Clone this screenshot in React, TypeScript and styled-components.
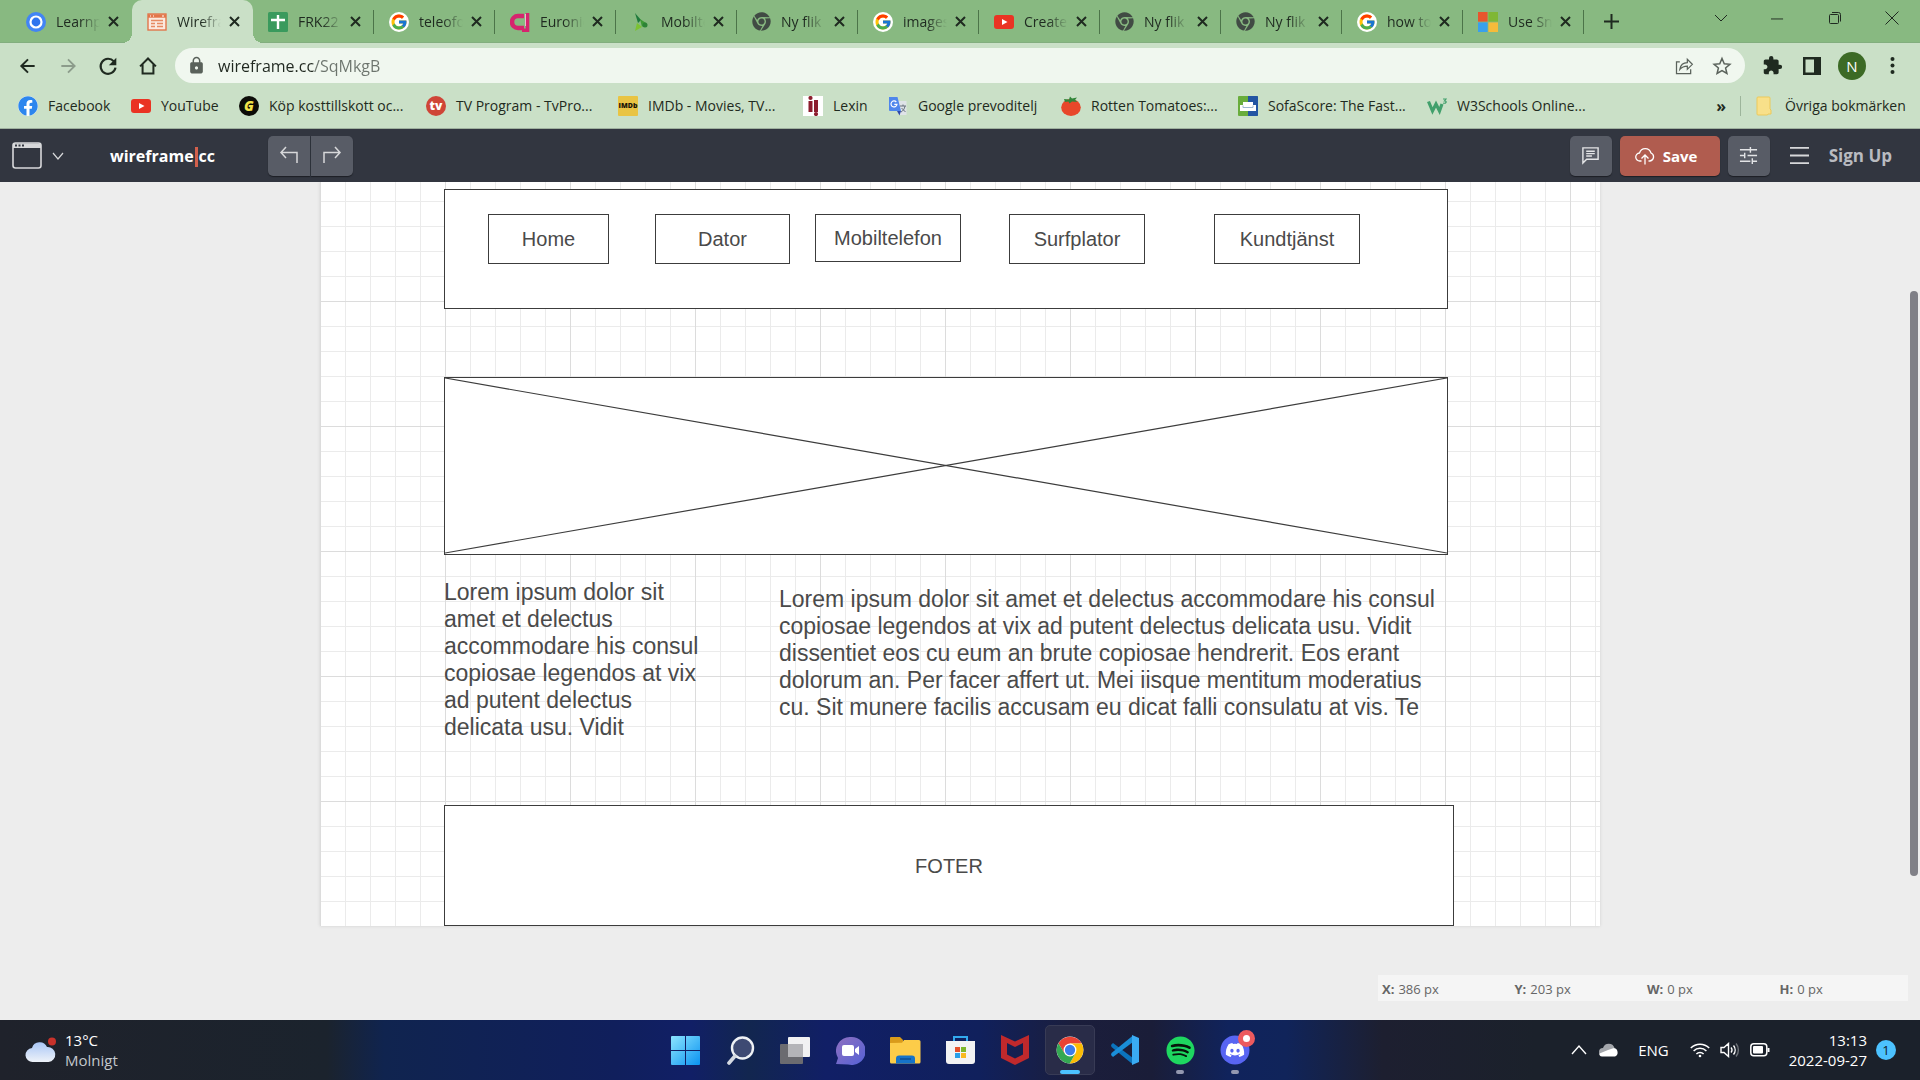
import React from "react";
import styled, { createGlobalStyle, css } from "styled-components";
import { FcGoogle } from "react-icons/fc";
import { FaSpotify, FaDiscord, FaFacebook, FaChrome } from "react-icons/fa";
import { MdExtension, MdLock } from "react-icons/md";

const GlobalStyle = createGlobalStyle`
  *, *::before, *::after { box-sizing: border-box; }
  body { margin: 0; font-family: "Open Sans", "Noto Sans", sans-serif; font-size: 14px; color: #1f2a20; }
  button, input { font: inherit; color: inherit; margin: 0; padding: 0; border: 0; background: none; }
  svg { display: block; flex: none; }
  p { margin: 0; }
`;

const Screen = styled.div`
  display: flex;
  flex-direction: column;
  height: 100vh;
  overflow: hidden;
`;

/* ---------- browser: tab strip ---------- */

const TabStrip = styled.header`
  display: flex;
  flex: none;
  height: 43px;
  padding-left: 11px;
  background: #88b981;
  border-bottom: 1px solid #82ae7e;
`;

const TabItem = styled.div<{ $active?: boolean; $divider?: boolean }>`
  position: relative;
  display: flex;
  align-items: center;
  flex: 0 1 121px;
  min-width: 0;
  height: 43px;
  padding: 0 9px 0 15px;
  gap: 10px;
  ${(p) =>
    p.$divider &&
    css`
      &::after {
        content: "";
        position: absolute;
        right: 0;
        top: 10px;
        width: 1px;
        height: 24px;
        background: #4c7449;
      }
    `}
  ${(p) =>
    p.$active &&
    css`
      background: #cae0c7;
      border-radius: 10px 10px 0 0;
      &::before,
      &::after {
        content: "";
        position: absolute;
        bottom: 0;
        width: 10px;
        height: 10px;
      }
      &::before {
        left: -10px;
        background: radial-gradient(circle at 0 0, transparent 10px, #cae0c7 10px);
      }
      &::after {
        right: -10px;
        background: radial-gradient(circle at 100% 0, transparent 10px, #cae0c7 10px);
      }
    `}
`;

const TabLabel = styled.button`
  flex: 1 1 0;
  width: 0;
  min-width: 0;
  overflow: hidden;
  white-space: nowrap;
  text-align: left;
  line-height: 20px;
  mask-image: linear-gradient(90deg, #000 24px, transparent 44px);
`;

const CloseTab = styled.button`
  display: grid;
  place-items: center;
  flex: none;
  width: 20px;
  height: 20px;
  margin-left: -7px;
`;

const NewTab = styled.button`
  display: grid;
  place-items: center;
  width: 54px;
  height: 42px;
`;

const WindowControls = styled.div`
  display: flex;
  margin-left: auto;
  height: 36px;
`;

const WindowButton = styled.button`
  display: grid;
  place-items: center;
  width: 57px;
`;

/* ---------- browser: address row ---------- */

const AddressRow = styled.div`
  display: flex;
  flex: none;
  align-items: center;
  height: 45px;
  padding: 0 8px;
  background: #cae0c7;
`;

const BarButton = styled.button<{ $w?: number }>`
  display: grid;
  place-items: center;
  width: ${(p) => p.$w ?? 40}px;
  height: 35px;
`;

const Omnibox = styled.label`
  display: flex;
  flex: 1;
  align-items: center;
  height: 35px;
  margin: 0 7px;
  padding: 0 4px 0 12px;
  border-radius: 18px;
  background: #f0f7ef;
  color: #5a625b;
`;

const UrlInput = styled.input`
  flex: 1;
  min-width: 0;
  margin-left: 12px;
  outline: 0;
  font-size: 16px;
  line-height: 24px;
  color: #202820;
  background: linear-gradient(90deg, #202820 96px, #6c746d 96px);
  background-clip: text;
  -webkit-text-fill-color: transparent;
`;

const Avatar = styled.span`
  display: grid;
  place-items: center;
  width: 28px;
  height: 28px;
  border-radius: 50%;
  background: #3c6a25;
  color: #fff;
  font-size: 15px;
`;

/* ---------- browser: bookmarks ---------- */

const Bookmarks = styled.nav`
  display: flex;
  flex: none;
  align-items: center;
  height: 41px;
  padding: 0 12px 4px 18px;
  background: #cae0c7;
  border-bottom: 1px solid #9fb19f;
`;

const Bookmark = styled.a<{ $w: number }>`
  display: flex;
  align-items: center;
  gap: 10px;
  width: ${(p) => p.$w}px;
  white-space: nowrap;
  line-height: 20px;
  color: #1f2a20;
  text-decoration: none;
`;

const BookmarksEnd = styled.div`
  display: flex;
  align-items: center;
  gap: 14px;
  margin-left: auto;
`;

const Overflow = styled.button`
  font-size: 16px;
  font-weight: 700;
  line-height: 20px;
`;

const Rule = styled.span`
  width: 1px;
  height: 20px;
  background: #9db59b;
`;

const Badge = styled.span<{ $bg: string; $fg: string; $round?: boolean; $size?: number }>`
  display: grid;
  place-items: center;
  flex: none;
  width: 20px;
  height: 20px;
  border-radius: ${(p) => (p.$round ? "50%" : "1px")};
  background: ${(p) => p.$bg};
  color: ${(p) => p.$fg};
  font-size: ${(p) => p.$size ?? 12}px;
  font-weight: 800;
  line-height: 20px;
  overflow: hidden;
`;

const White = styled.span`
  display: grid;
  place-items: center;
  flex: none;
  width: 20px;
  height: 20px;
  border-radius: 50%;
  background: #fff;
`;

/* ---------- wireframe editor ---------- */

const Toolbar = styled.div`
  display: flex;
  flex: none;
  align-items: center;
  height: 53px;
  padding: 0 28px 0 12px;
  background: #323640;
  color: #fff;
`;

const DeviceButton = styled.button`
  display: flex;
  align-items: center;
  gap: 10px;
  width: 98px;
`;

const Wordmark = styled.a`
  width: 158px;
  color: #fff;
  font-size: 16px;
  font-weight: 700;
  line-height: 24px;
  text-decoration: none;
`;

const Caret = styled.span`
  display: inline-block;
  width: 3px;
  height: 20px;
  margin: 0 1px;
  vertical-align: middle;
  background: #d2604c;
`;

const ToolGroup = styled.div`
  display: flex;
  gap: 1px;
`;

const ToolButton = styled.button<{ $radius?: string }>`
  display: grid;
  place-items: center;
  width: 42px;
  height: 40px;
  border-radius: ${(p) => p.$radius ?? "5px"};
  background: #585c66;
  box-shadow: 0 1px 1px #1c1f25;
`;

const ToolbarEnd = styled.div`
  display: flex;
  align-items: center;
  gap: 8px;
  margin-left: auto;
`;

const SaveButton = styled.button`
  display: flex;
  align-items: center;
  gap: 8px;
  width: 100px;
  height: 40px;
  padding-left: 15px;
  border-radius: 5px;
  background: #b05c4f;
  box-shadow: 0 1px 1px #1c1f25;
  font-size: 15px;
  font-weight: 700;
`;

const MenuButton = styled.button`
  margin: 0 12px;
`;

const SignUp = styled.a`
  color: #b9bbc0;
  font-size: 17px;
  font-weight: 700;
  line-height: 24px;
  text-decoration: none;
`;

const Workspace = styled.main`
  position: relative;
  flex: 1;
  min-height: 0;
  overflow: hidden;
  background: #ededed;
`;

const Paper = styled.section`
  position: relative;
  width: 1280px;
  height: 744px;
  margin: 0 auto;
  background-color: #fff;
  background-image: linear-gradient(90deg, #dcdcdc 1px, transparent 1px),
    linear-gradient(#dcdcdc 1px, transparent 1px),
    linear-gradient(90deg, #ebebeb 1px, transparent 1px),
    linear-gradient(#ebebeb 1px, transparent 1px);
  background-size: 125px 125px, 125px 125px, 25px 25px, 25px 25px;
  background-position: 0 0, 0 119px, 0 0, 0 19px;
  box-shadow: 0 0 3px #cfcfcf;
  font-family: "Liberation Sans", Arial, sans-serif;
  color: #4a4a4a;
`;

type Area = { $x: number; $y: number; $w: number; $h?: number };

const area = css<Area>`
  position: absolute;
  left: ${(p) => p.$x}px;
  top: ${(p) => p.$y}px;
  width: ${(p) => p.$w}px;
  height: ${(p) => (p.$h ? `${p.$h}px` : "auto")};
`;

const Shape = styled.div<Area>`
  ${area}
  display: grid;
  place-items: center;
  border: 1px solid #3c3c3c;
  background: #fff;
  font-size: 20px;
  line-height: 24px;
`;

const NavShape = styled.button<Area>`
  ${area}
  border: 1px solid #3c3c3c;
  background: #fff;
  font-size: 20px;
  line-height: 24px;
`;

const Copy = styled.p<Area>`
  ${area}
  font-size: 23px;
  line-height: 27px;
`;

const Cross = styled.svg`
  width: 100%;
  height: 100%;
`;

const Thumb = styled.div`
  position: absolute;
  top: 13%;
  right: 2px;
  width: 8px;
  height: 585px;
  border-radius: 4px;
  background: #808087;
`;

const Coordinates = styled.dl`
  position: absolute;
  right: 12px;
  bottom: 19px;
  display: grid;
  grid-template-columns: repeat(4, 1fr);
  width: 530px;
  height: 26px;
  margin: 0;
  background: #f5f5f5;
  color: #666;
  font-size: 13px;
  line-height: 28px;
`;

const Coordinate = styled.div`
  display: flex;
  gap: 4px;
  padding-left: 4px;
  dt { font-weight: 700; }
  dd { margin: 0; }
`;

/* ---------- desktop taskbar ---------- */

const Taskbar = styled.footer`
  display: grid;
  grid-template-columns: 1fr auto 1fr;
  flex: none;
  align-items: center;
  height: 60px;
  background: linear-gradient(
    90deg,
    #1f222b 0%,
    #1b232d 17%,
    #10244f 20%,
    #101f5c 32%,
    #111f66 36%,
    #12264f 39%,
    #111f66 43%,
    #10205c 51%,
    #1b1e3c 56%,
    #1a1d38 60%,
    #10235c 64%,
    #10245a 67%,
    #1d1f30 72%,
    #1b212b 80%
  );
  color: #fff;
  font-size: 15px;
`;

const Weather = styled.button`
  display: flex;
  align-items: center;
  gap: 8px;
  padding-left: 25px;
  text-align: left;
  line-height: 20px;
`;

const Lines = styled.span<{ $right?: boolean }>`
  display: flex;
  flex-direction: column;
  text-align: ${(p) => (p.$right ? "right" : "left")};
  line-height: 20px;
`;

const Muted = styled.span`
  color: #c3c7cb;
`;

const Apps = styled.div`
  display: flex;
  gap: 5px;
`;

const AppButton = styled.button<{ $open?: boolean; $running?: boolean }>`
  position: relative;
  display: grid;
  place-items: center;
  width: 50px;
  height: 50px;
  border: 1px solid ${(p) => (p.$open ? "#383b55" : "transparent")};
  border-radius: 5px;
  background: ${(p) => (p.$open ? "#292c48" : "transparent")};
  ${(p) =>
    (p.$open || p.$running) &&
    css`
      &::after {
        content: "";
        position: absolute;
        bottom: 0;
        left: 50%;
        width: ${p.$open ? 20 : 8}px;
        height: 4px;
        margin-left: ${p.$open ? -10 : -4}px;
        border-radius: 2px;
        background: ${p.$open ? "#4cc2ff" : "#9398b0"};
      }
    `}
`;

const Notice = styled.span`
  position: absolute;
  top: 4px;
  right: 4px;
  width: 17px;
  height: 17px;
  border: 5px solid #ec5a5e;
  border-radius: 50%;
  background: #fff;
`;

const Tray = styled.div`
  display: flex;
  align-items: center;
  justify-content: flex-end;
  padding-right: 24px;
`;

const TrayButton = styled.button<{ $gap: number }>`
  display: flex;
  align-items: center;
  gap: 10px;
  margin-right: ${(p) => p.$gap}px;
`;

const Count = styled.span`
  display: grid;
  place-items: center;
  width: 20px;
  height: 20px;
  border-radius: 50%;
  background: #4cc2ff;
  color: #10202c;
  font-size: 13px;
`;

/* ---------- drawings ---------- */

const Stroke = ({ d, size = 20, width = 2, color = "currentColor", box = 24 }: { d: string; size?: number; width?: number; color?: string; box?: number }) => (
  <svg width={size} height={size} viewBox={`0 0 ${box} ${box}`} fill="none" stroke={color} strokeWidth={width}>
    <path d={d} />
  </svg>
);

const RingIcon = () => (
  <svg width="20" height="20" viewBox="0 0 20 20">
    <circle cx="10" cy="10" r="10" fill="#4285f4" />
    <circle cx="10" cy="10" r="5.5" fill="#2f74ee" stroke="#fff" strokeWidth="2.2" />
  </svg>
);

const WireIcon = () => (
  <svg width="20" height="20" viewBox="0 0 20 20">
    <rect x="1" y="2" width="18" height="16" fill="#fbe9df" stroke="#e2764a" strokeWidth="1.4" />
    <path d="M1 4h18" stroke="#e2764a" strokeWidth="3.4" />
    <path d="M3 4h1M6 4h1M15 4h2" stroke="#fff" strokeWidth="1.2" />
    <path d="M4 8.5h12M4 11.5h4M4 14.5h4M10 11.5h6M10 14.5h6" stroke="#e68a62" strokeWidth="1.5" />
  </svg>
);

const SheetIcon = () => (
  <svg width="20" height="20" viewBox="0 0 20 20">
    <rect width="20" height="20" rx="1.5" fill="#3a9a5d" />
    <path d="M10 3v14M3 8h14" stroke="#fff" strokeWidth="2.4" />
  </svg>
);

const GoogleIcon = () => (
  <White>
    <FcGoogle size={18} />
  </White>
);

const EuronicsIcon = () => (
  <svg width="20" height="20" viewBox="0 0 20 20" fill="none">
    <path d="M14 4H8a6 6 0 0 0 0 12h6" stroke="#d6246e" strokeWidth="4.600" />
    <path d="M17.500 1v17.300H12" stroke="#d6246e" strokeWidth="3.600" />
    <path d="M15.500 2v12" stroke="#f2b6cf" strokeWidth="1" />
  </svg>
);

const LeafIcon = () => (
  <svg width="20" height="20" viewBox="0 0 20 20">
    <path d="M4 1l6 7-3 3z" fill="#1f7a3c" />
    <path d="M9 7l6 4-4 4z" fill="#3d9a35" />
    <path d="M4 19l2-8 5 4z" fill="#7cc232" />
    <circle cx="14" cy="13" r="2.500" fill="#2c8436" />
  </svg>
);

const ChromeGrey = () => <FaChrome size={19} color="#414b44" />;

const YoutubeIcon = () => (
  <svg width="20" height="20" viewBox="0 0 20 20">
    <rect y="3" width="20" height="14" rx="3" fill="#ea3323" />
    <path d="M8 7l5.500 3L8 13z" fill="#fff" />
  </svg>
);

const MicrosoftIcon = ({ size = 20 }: { size?: number }) => (
  <svg width={size} height={size} viewBox="0 0 20 20">
    <path fill="#e8552d" d="M0 0h9.600v9.600H0z" />
    <path fill="#7fb735" d="M10.400 0H20v9.600h-9.600z" />
    <path fill="#3aa0ec" d="M0 10.400h9.600V20H0z" />
    <path fill="#f5bb3a" d="M10.400 10.400H20V20h-9.600z" />
  </svg>
);

const LexinIcon = () => (
  <svg width="20" height="20" viewBox="0 0 20 20">
    <rect width="20" height="20" fill="#fff" />
    <g fill="#8c1c2c">
      <circle cx="7.500" cy="2" r="2.100" />
      <path d="M5.500 5h4v11h-4zM11 4h4v12h-4z" />
      <circle cx="13" cy="18" r="2.100" />
    </g>
  </svg>
);

const TranslateIcon = () => (
  <svg width="20" height="20" viewBox="0 0 20 20" fill="none">
    <path d="M7 5h11.500v14H11z" fill="#dfe3e8" />
    <path d="M12 10h6M15 8.500V10M13 16c2-1 3.500-3 4-6M13.500 12l4 4" stroke="#66717d" strokeWidth="1" />
    <path d="M9 15h4l-1.500 4.500z" fill="#2e49a8" />
    <path d="M1 1h8.500L13 15H2a1 1 0 0 1-1-1z" fill="#4f86ec" />
    <path d="M8.300 6A3 3 0 1 0 9 8.300H6.300" stroke="#fff" strokeWidth="1.200" />
  </svg>
);

const TomatoIcon = () => (
  <svg width="20" height="20" viewBox="0 0 20 20">
    <ellipse cx="10" cy="11.500" rx="9.800" ry="8.500" fill="#e8472a" />
    <path d="M3 3l5 .5L9 .5l2 2 5-1-2 2.500 2.500 2L11 5.500 8.500 7.500 7.500 5.500 4 6z" fill="#31863a" />
  </svg>
);

const SofaIcon = () => (
  <svg width="20" height="20" viewBox="0 0 20 20">
    <rect width="20" height="20" rx="1" fill="#69ad3c" />
    <path d="M10 0h9a1 1 0 0 1 1 1v18a1 1 0 0 1-1 1h-9z" fill="#2355a3" />
    <path d="M5 6h10v3h3v6H2V9h3z" fill="#fff" />
    <path d="M5 9.500v2h10v-2" fill="none" stroke="#9cb6cf" />
  </svg>
);

const W3Icon = () => (
  <svg width="20" height="20" viewBox="0 0 20 20" fill="none" stroke="#42a06c">
    <path d="M1.500 5.500L5.500 15 9 8l3.500 7L15 8" strokeWidth="3.200" />
    <path d="M16 3h3l-1.500 2c3 0 1.500 3-1.500 2" strokeWidth="1.200" />
  </svg>
);

const FolderIcon = () => (
  <svg width="20" height="20" viewBox="0 0 20 20">
    <path d="M2 2a1 1 0 0 1 1-1h11a1 1 0 0 1 1 1v11l1 1v4h-3l-.5 1H3a1 1 0 0 1-1-1z" fill="#f8e08a" stroke="#ecc95a" />
  </svg>
);

const CloseIcon = () => <Stroke d="M1 1l9 9M10 1l-9 9" size={11} width={2} box={11} />;

const ChromeColor = () => (
  <svg width="28" height="28" viewBox="0 0 48 48">
    <circle cx="24" cy="24" r="23" fill="#fff" />
    <path d="M24 13h20A23 23 0 0 0 4.100 12.500L14.500 30z" fill="#ea4335" />
    <path d="M33.500 29.500L23.500 47A23 23 0 0 0 44 13H24z" fill="#fbbc05" />
    <path d="M14.500 29.500L4.100 12.500A23 23 0 0 0 23.500 47l10-17.500z" fill="#34a853" />
    <circle cx="24" cy="24" r="11" fill="#fff" />
    <circle cx="24" cy="24" r="8.800" fill="#3b7ded" />
  </svg>
);

const StartIcon = () => (
  <svg width="29" height="29" viewBox="0 0 29 29">
    <linearGradient id="start" x1="0" y1="0" x2="1" y2="1">
      <stop stopColor="#8ce4ff" />
      <stop offset="1" stopColor="#0a93f0" />
    </linearGradient>
    <path fill="url(#start)" d="M0 1a1 1 0 0 1 1-1h13v14H0zM15 0h13a1 1 0 0 1 1 1v13H15zM0 15h14v14H1a1 1 0 0 1-1-1zM15 15h14v13a1 1 0 0 1-1 1H15z" />
  </svg>
);

const SearchIcon = () => (
  <svg width="29" height="29" viewBox="0 0 29 29" fill="none">
    <circle cx="16.500" cy="12" r="10.500" fill="#3e4a73" stroke="#eef1f5" strokeWidth="2.400" />
    <path d="M9 20l-6 7" stroke="#d5dae2" strokeWidth="3.600" strokeLinecap="round" />
  </svg>
);

const TaskViewIcon = () => (
  <svg width="31" height="29" viewBox="0 0 31 29">
    <rect x="8" y="1" width="22" height="20" rx="1" fill="#f1f1f2" />
    <rect x="0" y="8" width="23" height="20" rx="1" fill="#6b6b70" />
    <path d="M8 8h15v13H8z" fill="#b4b4b8" />
  </svg>
);

const TeamsIcon = () => (
  <svg width="29" height="29" viewBox="0 0 29 29">
    <linearGradient id="teams" x1="0" y1="0" x2="1" y2="1">
      <stop stopColor="#8f6fc0" />
      <stop offset="1" stopColor="#5462d6" />
    </linearGradient>
    <path d="M15 1a14 14 0 1 1-3 27.500L0 28l2-6A14 14 0 0 1 15 1z" fill="url(#teams)" />
    <rect x="6" y="9" width="12" height="11" rx="2" fill="#fff" />
    <path d="M19 13l4-3v9l-4-3z" fill="#fff" />
  </svg>
);

const ExplorerIcon = () => (
  <svg width="31" height="28" viewBox="0 0 31 28">
    <path d="M0 2a1 1 0 0 1 1-1h9l3 3v6H0z" fill="#d99b1a" />
    <path d="M0 7l12-.2 2-2.800h15a1.500 1.500 0 0 1 1.500 1.500V26a1.500 1.500 0 0 1-1.500 1.500H1.500A1.500 1.500 0 0 1 0 26z" fill="#fccc49" />
    <path d="M6 27.500v-5a3 3 0 0 1 3-3h13a3 3 0 0 1 3 3v5z" fill="#1673c8" />
    <path d="M10 23h11" stroke="#0d4d93" strokeWidth="1.500" />
  </svg>
);

const StoreIcon = () => (
  <svg width="29" height="30" viewBox="0 0 29 30">
    <path d="M8 7V2h13v5" fill="none" stroke="#32a9ee" strokeWidth="2" />
    <path d="M0 6h29v20a3 3 0 0 1-3 3H3a3 3 0 0 1-3-3z" fill="#f2f2f3" />
    <path fill="#e5502a" d="M9 12h5v5H9z" />
    <path fill="#7db62b" d="M15 12h5v5h-5z" />
    <path fill="#2a9fe8" d="M9 18h5v5H9z" />
    <path fill="#f8b91f" d="M15 18h5v5h-5z" />
  </svg>
);

const ShieldIcon = () => (
  <svg width="28" height="30" viewBox="0 0 28 30">
    <path d="M0 0l14 6.500L28 0v23l-14 7-14-7zM6 8v11.500l8 4 8-4V8l-8 4z" fill="#c0292c" fillRule="evenodd" />
  </svg>
);

const CodeIcon = () => (
  <svg width="30" height="30" viewBox="0 0 30 30">
    <path d="M1 10l2-2 20 15v6.500L1.500 12z" fill="#0b74bd" />
    <path d="M1 20l2 2L23 7V.5L1.500 18z" fill="#1a8ed8" />
    <path d="M22 0l7 3v24l-7 3z" fill="#3aabf3" />
  </svg>
);

const CloudIcon = () => (
  <svg width="32" height="26" viewBox="0 0 32 26">
    <linearGradient id="cloud" x1="0" y1="0" x2="0" y2="1">
      <stop stopColor="#a9c6f6" />
      <stop offset="1" stopColor="#eef2f8" />
    </linearGradient>
    <path d="M8 25a7 7 0 0 1-1-14 8 8 0 0 1 15-1 7.500 7.500 0 0 1 1.500 15z" fill="url(#cloud)" />
    <circle cx="27" cy="4.500" r="4" fill="#c8322b" />
  </svg>
);

const SpotifyIcon = () => (
  <svg width="29" height="29" viewBox="0 0 29 29">
    <circle cx="14.500" cy="14.500" r="12" fill="#07150b" />
    <FaSpotify size={29} color="#1ed760" />
  </svg>
);

const DiscordIcon = () => (
  <svg width="30" height="30" viewBox="0 0 30 30">
    <circle cx="15" cy="15" r="14.500" fill="#5865f2" />
    <FaDiscord x={5} y={5} size={20} color="#fff" />
  </svg>
);

/* ---------- data ---------- */

const tabs = [
  { label: "Learnpoint", icon: <RingIcon /> },
  { label: "Wireframe", icon: <WireIcon />, active: true },
  { label: "FRK22", icon: <SheetIcon />, divider: true },
  { label: "teleofon", icon: <GoogleIcon />, divider: true },
  { label: "Euronics", icon: <EuronicsIcon />, divider: true },
  { label: "Mobiltelefon", icon: <LeafIcon />, divider: true },
  { label: "Ny flik", icon: <ChromeGrey />, divider: true },
  { label: "images", icon: <GoogleIcon />, divider: true },
  { label: "Create", icon: <YoutubeIcon />, divider: true },
  { label: "Ny flik", icon: <ChromeGrey />, divider: true },
  { label: "Ny flik", icon: <ChromeGrey />, divider: true },
  { label: "how to", icon: <GoogleIcon />, divider: true },
  { label: "Use Snip", icon: <MicrosoftIcon />, divider: true },
];

const bookmarks = [
  { label: "Facebook", width: 113, icon: <White><FaFacebook size={20} color="#2d86ee" /></White> },
  { label: "YouTube", width: 108, icon: <YoutubeIcon /> },
  { label: "Köp kosttillskott oc...", width: 187, icon: <Badge $bg="#0c0c08" $fg="#f2e34a" $round $size={14}><i>G</i></Badge> },
  { label: "TV Program - TvPro...", width: 192, icon: <Badge $bg="#cf4537" $fg="#fff" $round>tv</Badge> },
  { label: "IMDb - Movies, TV...", width: 185, icon: <Badge $bg="#e9c443" $fg="#1a1608" $size={7}>IMDb</Badge> },
  { label: "Lexin", width: 85, icon: <LexinIcon /> },
  { label: "Google prevoditelj", width: 173, icon: <TranslateIcon /> },
  { label: "Rotten Tomatoes:...", width: 177, icon: <TomatoIcon /> },
  { label: "SofaScore: The Fast...", width: 189, icon: <SofaIcon /> },
  { label: "W3Schools Online...", width: 170, icon: <W3Icon /> },
];

const navShapes = [
  { label: "Home", x: 168, w: 121, h: 50 },
  { label: "Dator", x: 335, w: 135, h: 50 },
  { label: "Mobiltelefon", x: 495, w: 146, h: 48 },
  { label: "Surfplator", x: 689, w: 136, h: 50 },
  { label: "Kundtjänst", x: 894, w: 146, h: 50 },
];

const coordinates = [
  ["X:", "386 px"],
  ["Y:", "203 px"],
  ["W:", "0 px"],
  ["H:", "0 px"],
];

const apps = [
  { name: "Start", icon: <StartIcon /> },
  { name: "Search", icon: <SearchIcon /> },
  { name: "Task view", icon: <TaskViewIcon /> },
  { name: "Chat", icon: <TeamsIcon /> },
  { name: "File Explorer", icon: <ExplorerIcon /> },
  { name: "Store", icon: <StoreIcon /> },
  { name: "McAfee", icon: <ShieldIcon /> },
  { name: "Chrome", icon: <ChromeColor />, open: true },
  { name: "Visual Studio Code", icon: <CodeIcon /> },
  { name: "Spotify", icon: <SpotifyIcon />, running: true },
  { name: "Discord", icon: <DiscordIcon />, running: true, notice: true },
];

export default function App() {
  return (
    <Screen>
      <GlobalStyle />
      <TabStrip>
        {tabs.map((t, i) => (
          <TabItem key={i} $active={t.active} $divider={t.divider}>
            {t.icon}
            <TabLabel>{t.label}</TabLabel>
            <CloseTab aria-label="Close tab"><CloseIcon /></CloseTab>
          </TabItem>
        ))}
        <NewTab aria-label="New tab"><Stroke d="M7.500 0v15M0 7.500h15" size={15} box={15} /></NewTab>
        <WindowControls>
          <WindowButton aria-label="Search tabs"><Stroke d="M1 4l6 6 6-6" size={14} width={1} box={14} /></WindowButton>
          <WindowButton aria-label="Minimize"><Stroke d="M0 7.500h13" size={13} width={1} box={14} /></WindowButton>
          <WindowButton aria-label="Restore"><Stroke d="M2.500 3.500h7a1 1 0 0 1 1 1v7a1 1 0 0 1-1 1h-7a1 1 0 0 1-1-1v-7a1 1 0 0 1 1-1zM4 1.500h6.500a2 2 0 0 1 2 2v7" size={14} width={1} box={14} /></WindowButton>
          <WindowButton aria-label="Close"><Stroke d="M.5.5l13 13M13.500.5l-13 13" size={14} width={1} box={14} /></WindowButton>
        </WindowControls>
      </TabStrip>

      <AddressRow>
        <BarButton aria-label="Back"><Stroke d="M20 12H4M12 4l-8 8 8 8" size={20} width={2.4} /></BarButton>
        <BarButton aria-label="Forward"><Stroke d="M4 12h16M12 4l8 8-8 8" size={20} width={2.2} color="#8c9c8b" /></BarButton>
        <BarButton aria-label="Reload">
          <svg width="20" height="20" viewBox="0 0 24 24" fill="none" stroke="currentColor" strokeWidth="2.600">
            <path d="M19 6.500A9 9 0 1 0 21 14" />
            <path d="M22 2v9h-9z" fill="currentColor" stroke="none" />
          </svg>
        </BarButton>
        <BarButton aria-label="Home"><Stroke d="M2.500 12.500L12 3l9.500 9.500M5.500 10v11h13V10" size={20} width={2.4} /></BarButton>
        <Omnibox>
          <MdLock size={19} color="#59615a" />
          <UrlInput aria-label="Address" defaultValue="wireframe.cc/SqMkgB" />
          <BarButton $w={38} aria-label="Share"><Stroke d="M7 7H3v14h17v-5M7 16c1-6 5-8 9-8V4l6 6-6 6v-4c-4 0-6.500 1-9 4z" size={20} width={1.5} /></BarButton>
          <BarButton $w={38} aria-label="Bookmark this tab"><Stroke d="M12 3l2.700 6.300 6.800.6-5.200 4.500 1.600 6.600L12 17.500 6.100 21l1.600-6.600-5.200-4.500 6.800-.6z" size={20} width={1.8} /></BarButton>
        </Omnibox>
        <BarButton aria-label="Extensions"><MdExtension size={21} /></BarButton>
        <BarButton aria-label="Side panel">
          <svg width="18" height="18" viewBox="0 0 18 18"><path d="M0 0h18v18H0zM2.500 2.500v13H11v-13z" fill="currentColor" fillRule="evenodd" /></svg>
        </BarButton>
        <BarButton aria-label="Profile"><Avatar>N</Avatar></BarButton>
        <BarButton aria-label="Menu">
          <svg width="5" height="17" viewBox="0 0 5 17" fill="currentColor"><circle cx="2.500" cy="2" r="2" /><circle cx="2.500" cy="8.500" r="2" /><circle cx="2.500" cy="15" r="2" /></svg>
        </BarButton>
      </AddressRow>

      <Bookmarks>
        {bookmarks.map((b) => (
          <Bookmark key={b.label} href="#" $w={b.width}>{b.icon}{b.label}</Bookmark>
        ))}
        <BookmarksEnd>
          <Overflow aria-label="More bookmarks">»</Overflow>
          <Rule />
          <Bookmark href="#" $w={153}><FolderIcon />Övriga bokmärken</Bookmark>
        </BookmarksEnd>
      </Bookmarks>

      <Toolbar>
        <DeviceButton aria-label="Device">
          <svg width="30" height="27" viewBox="0 0 30 27">
            <rect x="1" y="1" width="28" height="25" rx="2.500" fill="none" stroke="#d7d8da" strokeWidth="1.600" />
            <path d="M1 1.500h28V6H1z" fill="#d7d8da" />
            <path d="M3 3.500h2M6.500 3.500h2M10 3.500h2" stroke="#323640" strokeWidth="2" />
          </svg>
          <Stroke d="M1 3l5 6 5-6" size={12} width={1.2} color="#d7d8da" box={12} />
        </DeviceButton>
        <Wordmark href="#">wireframe<Caret />cc</Wordmark>
        <ToolGroup>
          <ToolButton $radius="5px 0 0 5px" aria-label="Undo"><Stroke d="M7 1L2 6.500 7 12M2 6.500h16V17" size={20} width={1.5} color="#d7d8da" box={20} /></ToolButton>
          <ToolButton $radius="0 5px 5px 0" aria-label="Redo"><Stroke d="M13 1l5 5.500-5 5.500M18 6.500H2V17" size={20} width={1.5} color="#d7d8da" box={20} /></ToolButton>
        </ToolGroup>
        <ToolbarEnd>
          <ToolButton aria-label="Comments"><Stroke d="M2 2h16v12H6l-4 4zM5.500 5.500h9M5.500 8h9M5.500 10.500h6" size={19} width={1.5} color="#e3e4e6" box={20} /></ToolButton>
          <SaveButton>
            <Stroke d="M6.500 15H5a4 4 0 0 1-.5-8 6 6 0 0 1 11.500 0 4.200 4.200 0 0 1-1 8h-1.500M10 18.500v-9M6.500 12.500L10 9l3.500 3.500" size={20} width={1.3} box={20} />
            Save
          </SaveButton>
          <ToolButton aria-label="Settings"><Stroke d="M1 4h11M12 1v6M12 4h7M1 10h5M6 7v6M9 10h10M1 16h11M14 13v6M14 16h5" size={19} width={1.5} color="#e3e4e6" box={20} /></ToolButton>
          <MenuButton aria-label="Menu"><Stroke d="M0 2h20M0 10h20M0 18h20" size={19} width={2} color="#d7d8da" box={20} /></MenuButton>
          <SignUp href="#">Sign Up</SignUp>
        </ToolbarEnd>
      </Toolbar>

      <Workspace>
        <Paper>
          <Shape $x={124} $y={7} $w={1004} $h={120} />
          {navShapes.map((n) => (
            <NavShape key={n.label} $x={n.x} $y={32} $w={n.w} $h={n.h}>{n.label}</NavShape>
          ))}
          <Shape $x={124} $y={195} $w={1004} $h={178}>
            <Cross viewBox="0 0 1002 176" preserveAspectRatio="none" stroke="#3c3c3c" strokeWidth="1.200">
              <path d="M0 0l1002 175M0 175L1002 0" />
            </Cross>
          </Shape>
          <Copy $x={124} $y={397} $w={260}>
            Lorem ipsum dolor sit amet et delectus accommodare his consul copiosae legendos at vix ad putent delectus delicata usu. Vidit
          </Copy>
          <Copy $x={459} $y={404} $w={664}>
            Lorem ipsum dolor sit amet et delectus accommodare his consul copiosae legendos at vix ad putent delectus delicata usu. Vidit dissentiet eos cu eum an brute copiosae hendrerit. Eos erant dolorum an. Per facer affert ut. Mei iisque mentitum moderatius cu. Sit munere facilis accusam eu dicat falli consulatu at vis. Te
          </Copy>
          <Shape $x={124} $y={623} $w={1010} $h={121}>FOTER</Shape>
        </Paper>
        <Thumb />
        <Coordinates>
          {coordinates.map(([k, v]) => (
            <Coordinate key={k}><dt>{k}</dt><dd>{v}</dd></Coordinate>
          ))}
        </Coordinates>
      </Workspace>

      <Taskbar>
        <Weather>
          <CloudIcon />
          <Lines><span>13°C</span><Muted>Molnigt</Muted></Lines>
        </Weather>
        <Apps>
          {apps.map((a) => (
            <AppButton key={a.name} aria-label={a.name} $open={a.open} $running={a.running}>
              {a.icon}
              {a.notice && <Notice />}
            </AppButton>
          ))}
        </Apps>
        <Tray>
          <TrayButton $gap={12} aria-label="Hidden icons"><Stroke d="M1 12l7-8 7 8" size={16} width={1.4} box={16} /></TrayButton>
          <TrayButton $gap={19} aria-label="OneDrive">
            <svg width="20" height="14" viewBox="0 0 20 14"><path d="M4 13A4 4 0 0 1 4 5a6 6 0 0 1 11.500 0L10 9z" fill="#a3a6ab" /><path d="M3 13.500c-2 0-3-1.500-2.500-3L9 7l6-2a4.500 4.500 0 0 1 1 8.500z" fill="#fff" /></svg>
          </TrayButton>
          <TrayButton $gap={21}>ENG</TrayButton>
          <TrayButton $gap={19} aria-label="Network, volume and battery">
            <svg width="20" height="16" viewBox="0 0 20 16" fill="none" stroke="#fff" strokeWidth="1.500"><path d="M.8 6a13 13 0 0 1 18.400 0M3.600 9a9 9 0 0 1 12.800 0M6.400 12a5 5 0 0 1 7.200 0" /><circle cx="10" cy="14" r="1.300" fill="#fff" stroke="none" /></svg>
            <svg width="20" height="16" viewBox="0 0 20 16" fill="none" stroke="#fff" strokeWidth="1.400"><path d="M1 5.500h3L8.500 1.500v13L4 10.500H1zM11 5.500a4 4 0 0 1 0 5M13.500 3.500a7 7 0 0 1 0 9" /><path d="M16 1.500a10 10 0 0 1 0 13" stroke="#6d7178" /></svg>
            <svg width="20" height="14" viewBox="0 0 20 14" fill="none"><rect x=".8" y=".8" width="16" height="12" rx="3" stroke="#fff" strokeWidth="1.500" /><rect x="3" y="3" width="10" height="7.600" rx="1" fill="#fff" /><path d="M18.500 5v4" stroke="#fff" strokeWidth="2" /></svg>
          </TrayButton>
          <TrayButton $gap={9}><Lines $right><span>13:13</span><span>2022-09-27</span></Lines></TrayButton>
          <Count>1</Count>
        </Tray>
      </Taskbar>
    </Screen>
  );
}
